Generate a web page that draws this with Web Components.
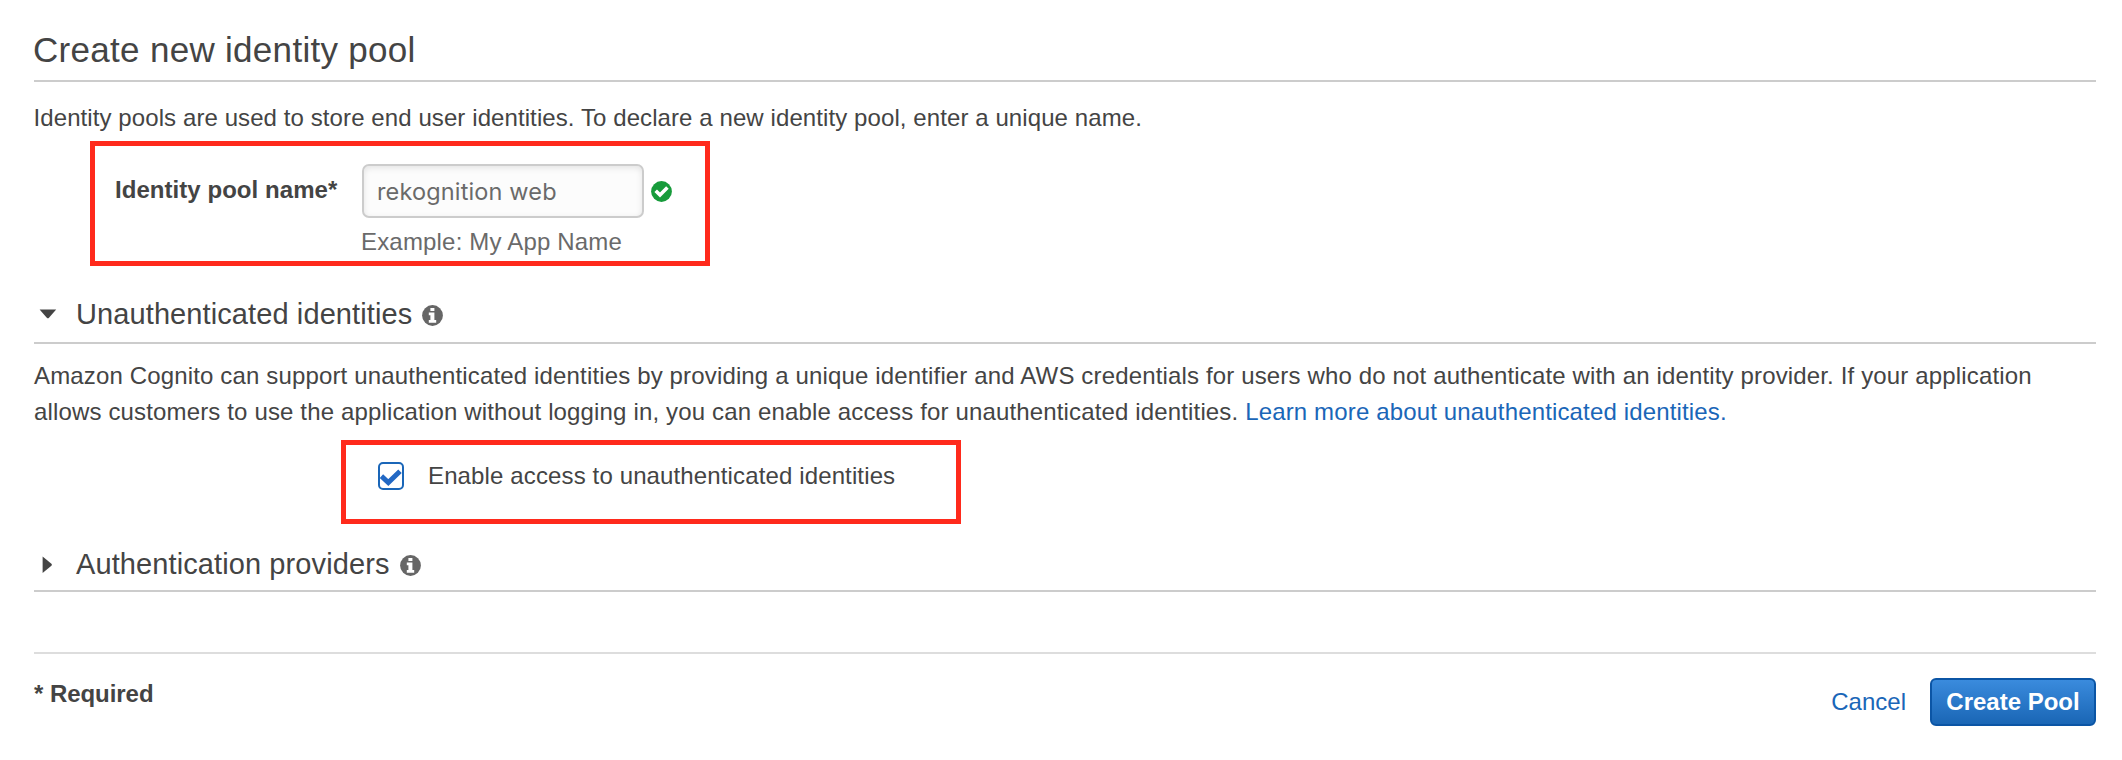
<!DOCTYPE html>
<html lang="en">
<head>
<meta charset="utf-8">
<title>Create new identity pool</title>
<style>
html, body { margin: 0; padding: 0; background: #fff; }
body { font-family: "Liberation Sans", Arial, sans-serif; font-size: 24px; line-height: 36px; color: #444; }
</style>
</head>
<body>
<pool-page></pool-page>
<script>
function define(name, html) {
  const t = document.createElement('template');
  t.innerHTML = html;
  customElements.define(name, class extends HTMLElement {
    constructor() {
      super();
      this.attachShadow({ mode: 'open' }).appendChild(t.content.cloneNode(true));
    }
  });
}

define('page-title', `
<style>
:host { display: block; box-sizing: border-box; height: 82px; padding-top: 28px; border-bottom: 2px solid #ccc; }
h1 { margin: 0 0 0 -1px; font-weight: 400; font-size: 35px; line-height: 44px; letter-spacing: .3px; white-space: nowrap; }
</style>
<h1><slot></slot></h1>`);

define('info-icon', `
<style>
:host { display: block; width: 21px; height: 21px; }
svg { display: block; width: 100%; height: 100%; }
</style>
<svg viewBox="0 0 21 21"><circle cx="10.5" cy="10.5" r="10.4" fill="#666"/><path fill="#fff" d="M8.4 2.9h4v3.2h-4zM6.8 7.5h5.6v7.4h1.8v2.8H6.8v-2.8h1.6v-4.6H6.8z"/></svg>`);

define('valid-icon', `
<style>
:host { display: block; width: 21px; height: 21px; }
svg { display: block; width: 100%; height: 100%; }
</style>
<svg viewBox="0 0 21 21"><circle cx="10.5" cy="10.5" r="10.4" fill="#179b3b"/><path fill="none" stroke="#fff" stroke-width="3.6" d="M4.7 9.7 9 14 16.4 6.6"/></svg>`);

define('section-header', `
<style>
:host { display: flex; box-sizing: border-box; height: 52px; border-bottom: 2px solid #ccc; }
:host([collapsed]) { height: 50px; }
.caret { width: 42px; box-sizing: border-box; padding: 17px 0 0 5px; flex: none; }
svg { display: block; }
.right { display: none; }
:host([collapsed]) .down { display: none; }
:host([collapsed]) .right { display: block; margin: -3px 0 0 3px; }
h2 { margin: 4px 10px 0 0; font-weight: 400; font-size: 29px; line-height: 36px; letter-spacing: .1px; white-space: nowrap; }
info-icon { margin-top: 13px; }
</style>
<div class="caret">
  <svg class="down" width="18" height="10" viewBox="0 0 18 10"><path fill="#444" d="M.6.4h16.6L10 8.7q-1.1 1.2-2.2 0z"/></svg>
  <svg class="right" width="11" height="18" viewBox="0 0 11 18"><path fill="#444" d="M.6.6v16.4L9.4 9.8q1.1-1 0-2z"/></svg>
</div>
<h2><slot></slot></h2>
<info-icon></info-icon>`);

define('highlight-frame', `
<style>
:host { display: block; box-sizing: border-box; border: 5px solid #ff2a1c; }
</style>
<slot></slot>`);

define('name-field', `
<style>
:host { display: grid; grid-template-columns: 267px 281px 8px 21px; }
.label { font-weight: 700; margin: 26px 0 0 20px; white-space: nowrap; letter-spacing: .05px; }
.input { box-sizing: border-box; margin-top: 18px; height: 54px; width: 282px; border: 2px solid #ccc; border-radius: 7px; background: #fcfcfc; box-shadow: inset 0 2px 6px rgba(0,0,0,.1); padding: 8px 0 0 13px; line-height: 36px; font-family: Inter, sans-serif; font-size: 23.5px; letter-spacing: .15px; color: #6a6a6a; white-space: nowrap; }
valid-icon { grid-column: 4; margin-top: 35px; }
.hint { grid-column: 2; margin: 6px 0 0 -1px; color: #6a6a6a; letter-spacing: .18px; white-space: nowrap; }
</style>
<div class="label"><slot name="label"></slot></div>
<div class="input"><slot name="value"></slot></div>
<valid-icon></valid-icon>
<div class="hint"><slot name="hint"></slot></div>`);

define('text-link', `
<style>
:host { display: inline; color: #1a66b8; }
</style>
<slot></slot>`);

define('check-option', `
<style>
:host { display: flex; }
.box { box-sizing: border-box; width: 26px; height: 28px; border: 2px solid #1a66b8; border-radius: 5px; margin: 17px 24px 0 32px; flex: none; }
svg { display: block; }
.text { margin-top: 13px; letter-spacing: .13px; white-space: nowrap; }
</style>
<div class="box"><svg width="22" height="24" viewBox="0 0 22 24"><path fill="none" stroke="#2268c4" stroke-width="5" d="M1.4 12.2 8.3 18.6 20 7.3"/></svg></div>
<div class="text"><slot></slot></div>`);

define('form-footer', `
<style>
:host { display: flex; box-sizing: border-box; border-top: 2px solid #ddd; }
.note { margin: 22px auto 0 0; font-weight: 700; letter-spacing: -.05px; }
.cancel { margin: 30px 24px 0 0; }
.primary { box-sizing: border-box; width: 166px; height: 48px; margin-top: 24px; border: 2px solid #0b55a5; border-radius: 6px; background: linear-gradient(#3a8bdd, #1a66b5); color: #fff; font-weight: 700; text-align: center; line-height: 44px; white-space: nowrap; }
</style>
<div class="note"><slot name="note"></slot></div>
<div class="cancel"><slot name="cancel"></slot></div>
<div class="primary"><slot name="submit"></slot></div>`);

define('pool-page', `
<style>
:host { display: block; box-sizing: border-box; width: 2122px; height: 760px; padding: 0 26px 0 34px; overflow: hidden; }
p { margin: 0; white-space: nowrap; }
.intro { padding-top: 18px; letter-spacing: .09px; margin-left: -.5px; }
.name { width: 620px; height: 125px; margin: 5px 0 0 56px; }
.unauth { margin-top: 26px; }
.desc { padding-top: 14px; letter-spacing: .15px; }
.access { width: 620px; height: 84px; margin: 10px 0 0 307px; }
.providers { margin-top: 18px; }
form-footer { margin-top: 60px; }
</style>
<page-title>Create new identity pool</page-title>
<p class="intro">Identity pools are used to store end user identities. To declare a new identity pool, enter a unique name.</p>
<highlight-frame class="name">
  <name-field>
    <span slot="label">Identity pool name*</span>
    <span slot="value">rekognition web</span>
    <span slot="hint">Example: My App Name</span>
  </name-field>
</highlight-frame>
<section-header class="unauth">Unauthenticated identities</section-header>
<p class="desc">Amazon Cognito can support unauthenticated identities by providing a unique identifier and AWS credentials for users who do not authenticate with an identity provider. If your application<br>allows customers to use the application without logging in, you can enable access for unauthenticated identities. <text-link>Learn more about unauthenticated identities.</text-link></p>
<highlight-frame class="access"><check-option>Enable access to unauthenticated identities</check-option></highlight-frame>
<section-header class="providers" collapsed>Authentication providers</section-header>
<form-footer>
  <span slot="note">* Required</span>
  <text-link slot="cancel">Cancel</text-link>
  <span slot="submit">Create Pool</span>
</form-footer>`);
</script>
</body>
</html>
